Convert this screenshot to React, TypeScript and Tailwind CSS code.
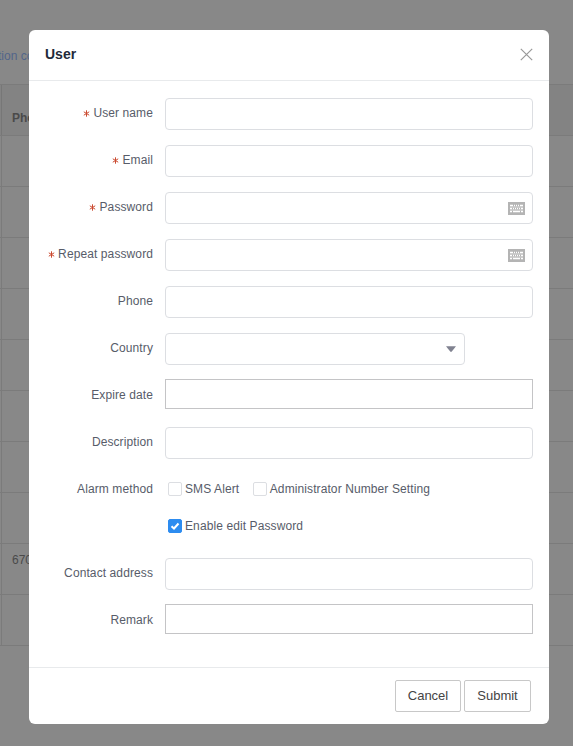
import React, { useState } from "react";
import clsx from "clsx";

const tableRows = ["", "", "", "", "", "", "", "", "670", ""];

function Star() {
  return (
    <svg width="7" height="7" viewBox="0 0 7 7" className="mr-[3.5px] mt-px shrink-0" stroke="#cb4a30" strokeWidth="1">
      <path d="M3.5 0.3v6.4M0.8 1.8l5.4 3.4M6.2 1.8L0.8 5.2" />
    </svg>
  );
}

function KeyboardIcon() {
  return (
    <svg width="17" height="13" viewBox="0 0 17 13" className="mt-px shrink-0">
      <rect width="17" height="13" fill="#b4b4b4" />
      <path
        d="M2 3.5h3M6 3.5h1M8 3.5h1M10 3.5h1M12 3.5h3M2 6.5h2M5 6.5h1M7 6.5h1M9 6.5h1M11 6.5h1M13 6.5h2M2 9.5h2M5 9.5h7M13 9.5h2"
        stroke="#fff"
        strokeWidth="1.3"
        fill="none"
      />
      <path d="M2 5h13M2 8h13" stroke="#dcdcdc" strokeWidth="0.8" />
    </svg>
  );
}

type FieldProps = {
  label: string;
  required?: boolean;
  keyboard?: boolean;
  square?: boolean;
};

function Field({ label, required, keyboard, square }: FieldProps) {
  return (
    <div className="flex h-8 items-start">
      <label className="mr-3 flex h-[30px] w-[124px] shrink-0 items-center justify-end whitespace-nowrap">
        {required && <Star />}
        {label}
      </label>
      <div
        className={clsx(
          "flex flex-1 items-center border bg-white pr-[7px]",
          square ? "-mt-px h-[30px] border-[#c4c4c6]" : "h-8 rounded-[4px] border-[#dcdee2]"
        )}
      >
        <input aria-label={label} type={keyboard ? "password" : "text"} className="h-full min-w-0 flex-1 bg-transparent px-2 outline-none" />
        {keyboard && <KeyboardIcon />}
      </div>
    </div>
  );
}

function Check({ label, initial = false }: { label: string; initial?: boolean }) {
  const [checked, setChecked] = useState(initial);
  return (
    <button type="button" role="checkbox" aria-checked={checked} onClick={() => setChecked(!checked)} className="flex items-center gap-[3px] whitespace-nowrap">
      <span
        className={clsx(
          "flex h-[14px] w-[14px] items-center justify-center rounded-[2px] border",
          checked ? "border-[#2d8cf0] bg-[#2d8cf0]" : "border-[#dcdee2] bg-white"
        )}
      >
        {checked && (
          <svg width="10" height="10" viewBox="0 0 10 10" fill="none" stroke="#fff" strokeWidth="2" className="shrink-0">
            <path d="M1.5 5.2L4 7.5L8.5 2.5" />
          </svg>
        )}
      </span>
      {label}
    </button>
  );
}

export default function App() {
  return (
    <div className="relative h-[746px] w-[573px] overflow-hidden bg-[#888] font-['Liberation_Sans',Arial,sans-serif] text-[12px]">
      <div className="flex h-[84px] items-start pt-[47px] text-[#52658a]">
        <span className="-ml-[2px] leading-[18px]">tion co</span>
      </div>
      <div className="border-t border-[#7b7b7b] bg-[linear-gradient(to_right,transparent_1px,#7b7b7b_1px,#7b7b7b_2px,transparent_2px)] text-[#4a4a4a]">
        <div className="flex h-[51px] items-center border-b border-[#7b7b7b] bg-black/[0.03] pl-3 pt-4 font-bold">
          Pho
        </div>
        {tableRows.map((cell, i) => (
          <div key={i} className="flex h-[51px] items-start border-b border-[#7b7b7b] pl-3 pt-[7px] leading-[18px]">
            {cell}
          </div>
        ))}
      </div>

      <div className="absolute left-[29px] top-[30px] flex h-[694px] w-[520px] flex-col rounded-[6px] bg-white tracking-[0.1px] text-[#575c69]">
        <div className="flex h-[51px] shrink-0 items-center justify-between border-b border-[#e8eaec] px-4">
          <h1 className="mb-[2px] text-[14px] font-bold tracking-normal text-[#222a3a]">User</h1>
          <button type="button" aria-label="Close" className="mb-[2px]">
            <svg width="13" height="13" viewBox="0 0 13 13" stroke="#999" strokeWidth="1.2">
              <path d="M0.8 0.8l11.4 11.4M12.2 0.8L0.8 12.2" />
            </svg>
          </button>
        </div>

        <div className="flex flex-1 flex-col gap-[15px] pr-4 pt-[17px]">
          <Field label="User name" required />
          <Field label="Email" required />
          <Field label="Password" required keyboard />
          <Field label="Repeat password" required keyboard />
          <Field label="Phone" />
          <div className="flex h-8">
            <label className="mr-3 flex h-[30px] w-[124px] shrink-0 items-center justify-end">Country</label>
            <button type="button" aria-label="Country" className="flex h-8 w-[300px] items-center justify-end rounded-[4px] border border-[#dcdee2] pr-2">
              <svg width="10" height="6" viewBox="0 0 10 6" className="mb-px">
                <path d="M0 0.3h10L5.6 5.7h-1.2z" fill="#808290" />
              </svg>
            </button>
          </div>
          <Field label="Expire date" square />
          <Field label="Description" />
          <div className="flex h-[69px]">
            <label className="mr-[15px] flex h-[30px] w-[124px] shrink-0 items-center justify-end">Alarm method</label>
            <div>
              <div className="flex h-[30px] items-center gap-[13.5px]">
                <Check label="SMS Alert" />
                <Check label="Administrator Number Setting" />
              </div>
              <div className="mt-[7px] flex h-[30px] items-center">
                <Check label="Enable edit Password" initial />
              </div>
            </div>
          </div>
          <Field label="Contact address" />
          <Field label="Remark" square />
        </div>

        <div className="flex h-[57px] shrink-0 justify-end gap-[3px] border-t border-[#e8eaec] pr-[18px] pt-3 text-[13px] tracking-normal text-[#444]">
          <button type="button" className="h-8 w-[66px] rounded-[2px] border border-[#c8c8c8] bg-white">
            Cancel
          </button>
          <button type="button" className="h-8 w-[67px] rounded-[2px] border border-[#c8c8c8] bg-white">
            Submit
          </button>
        </div>
      </div>
    </div>
  );
}
